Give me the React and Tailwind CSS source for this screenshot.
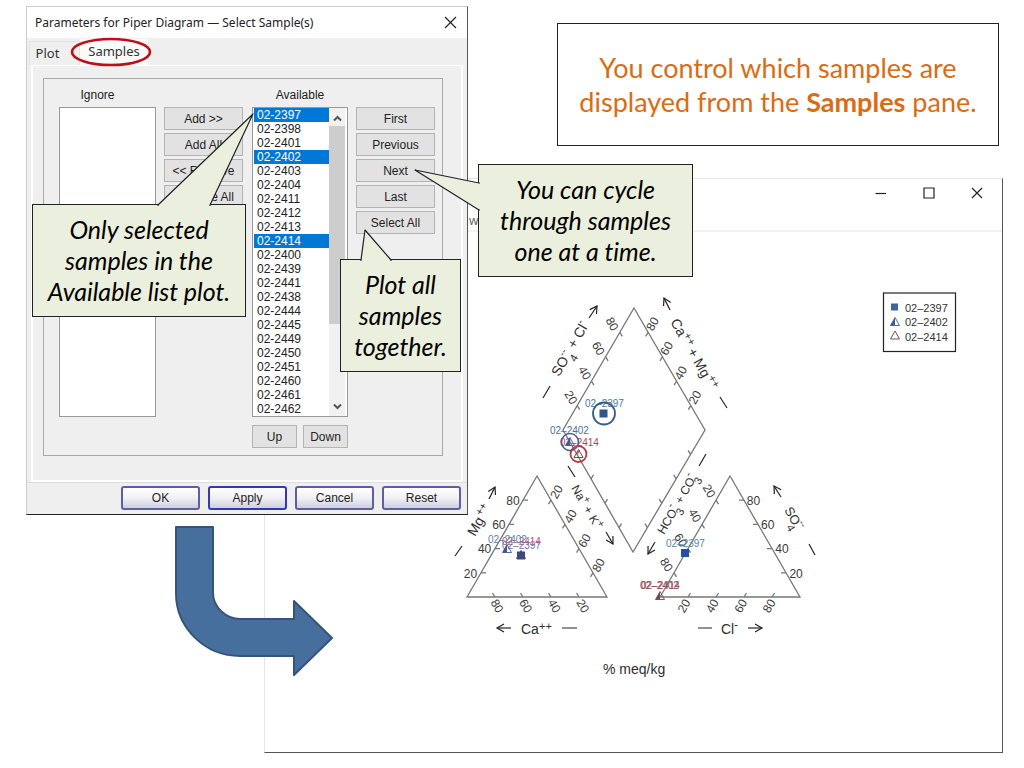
import React from "react";

const samples = [
  "02-2397", "02-2398", "02-2401", "02-2402", "02-2403", "02-2404", "02-2411", "02-2412",
  "02-2413", "02-2414", "02-2400", "02-2439", "02-2441", "02-2438", "02-2444", "02-2445",
  "02-2449", "02-2450", "02-2451", "02-2460", "02-2461", "02-2462",
];
const selected = ["02-2397", "02-2402", "02-2414"];

function PushButton({ children, className = "w-full" }) {
  return (
    <button
      type="button"
      className={`h-[23px] border border-[#b4b4b4] bg-[#e2e2e2] text-xs leading-none text-[#222] ${className}`}
    >
      {children}
    </button>
  );
}

function FooterButton({ children, primary }) {
  return (
    <button
      type="button"
      className={`h-6 w-[79px] rounded-[3px] border-2 bg-linear-to-b from-white via-[#f0f0f5] to-[#cfcfde] text-xs leading-none text-[#222] ${
        primary ? "border-[#3438b4]" : "border-[#5c5fa8]"
      }`}
    >
      {children}
    </button>
  );
}

function SampleDialog() {
  return (
    <section
      aria-label="Select samples"
      className="absolute top-[6px] left-[26px] flex w-[442px] flex-col border border-t-[#ccc] border-r-[#555] border-b-[#222] border-l-[#ccc] bg-[#efefef] font-['Liberation_Sans',Arial,sans-serif] text-xs text-[#222]"
    >
      <header className="flex h-[31px] items-center justify-between bg-white pr-[10px] pl-2">
        <h2 className="font-['Noto_Sans',sans-serif] text-xs whitespace-nowrap">
          Parameters for Piper Diagram — Select Sample(s)
        </h2>
        <button type="button" aria-label="Close">
          <svg width="13" height="13" viewBox="0 0 13 13" fill="none" stroke="#222" strokeWidth="1.2">
            <path d="M1 1L12 12M12 1L1 12" />
          </svg>
        </button>
      </header>

      <div role="tablist" className="flex h-[27px] items-end pl-[2px] font-['Noto_Sans',sans-serif] text-[13px]">
        <button type="button" role="tab" aria-selected="false" className="h-6 w-[51px] border border-b-0 border-[#e2e2e2] pr-[14px] text-[#333]">
          Plot
        </button>
        <button type="button" role="tab" aria-selected="true" className="relative h-[26px] w-[68px] bg-[#fafafa] text-[#333]">
          Samples
          <svg className="absolute -top-[2px] -left-[10px]" width="82" height="30" viewBox="0 0 82 30" fill="none">
            <ellipse cx="41" cy="15" rx="39" ry="13" stroke="#bb1018" strokeWidth="2.6" />
          </svg>
        </button>
      </div>

      <div className="mx-1 border-2 border-t border-white pt-3 pr-[18px] pb-6 pl-[10px]">
        <div className="flex h-[378px] items-start border border-[#a8a8a8] pt-2 pr-[7px] pl-[15px]">
          <div className="flex w-[97px] flex-col">
            <label htmlFor="ignore" className="mb-1 h-4 pr-5 text-center leading-4">Ignore</label>
            <select id="ignore" multiple className="h-[310px] border border-[#999] bg-white" />
          </div>

          <div className="mt-5 ml-2 flex w-[79px] flex-col gap-[3px]">
            <PushButton>Add &gt;&gt;</PushButton>
            <PushButton>Add All</PushButton>
            <PushButton>&lt;&lt; Remove</PushButton>
            <PushButton>Remove All</PushButton>
          </div>

          <div className="ml-[9px] flex w-24 flex-col">
            <label htmlFor="available" className="mb-1 h-4 text-center leading-4">Available</label>
            <div className="flex h-[310px] border border-[#999] bg-white">
              <select
                id="available"
                multiple
                size={22}
                defaultValue={selected}
                className="h-[308px] w-[76px] appearance-none overflow-hidden border-0 p-0 pl-px text-xs outline-none"
              >
                {samples.map((s) => (
                  <option
                    key={s}
                    value={s}
                    className="h-[14px] min-h-0 p-0 pl-[3px] leading-[14px] text-[#222] checked:bg-[#0078d7] checked:text-white"
                  >
                    {s}
                  </option>
                ))}
              </select>
              <div aria-hidden="true" className="flex w-4 flex-col items-center bg-[#f1f1f1]">
                <svg className="mt-[7px] mb-1" width="9" height="7" viewBox="0 0 9 7" fill="none" stroke="#555" strokeWidth="2">
                  <path d="M1 5.5L4.500 2L8 5.500" />
                </svg>
                <div className="h-[198px] w-full bg-[#cdcdcd]" />
                <svg className="mt-auto mb-[6px]" width="9" height="7" viewBox="0 0 9 7" fill="none" stroke="#555" strokeWidth="2">
                  <path d="M1 1.500L4.500 5L8 1.500" />
                </svg>
              </div>
            </div>
            <div className="mt-2 flex gap-[6px]">
              <PushButton className="w-[45px] shrink-0">Up</PushButton>
              <PushButton className="w-[45px] shrink-0">Down</PushButton>
            </div>
          </div>

          <div className="mt-5 ml-2 flex w-[79px] flex-col gap-[3px]">
            <PushButton>First</PushButton>
            <PushButton>Previous</PushButton>
            <PushButton>Next</PushButton>
            <PushButton>Last</PushButton>
            <PushButton>Select All</PushButton>
          </div>
        </div>
      </div>

      <footer className="flex justify-end gap-2 border-t border-[#ddd] px-[6px] pt-[3px] pb-1">
        <FooterButton>OK</FooterButton>
        <FooterButton primary>Apply</FooterButton>
        <FooterButton>Cancel</FooterButton>
        <FooterButton>Reset</FooterButton>
      </footer>
    </section>
  );
}

const fractions = [0.2, 0.4, 0.6, 0.8];

/* Ticks on the edge from a to b, each drawn as the short vector d. */
function Ticks({ a, b, d }) {
  const path = fractions
    .map((t) => `M${a[0] + (b[0] - a[0]) * t} ${a[1] + (b[1] - a[1]) * t}l${d[0]} ${d[1]}`)
    .join("");
  return <path d={path} />;
}

/* Four scale numbers spaced evenly from one point by a step, centred and rotated. */
function Scale({ from, step, angle = 0, values }) {
  return values.map((v, i) => (
    <text
      key={v}
      textAnchor="middle"
      dy="4"
      transform={`translate(${from[0] + step[0] * i} ${from[1] + step[1] * i}) rotate(${angle})`}
    >
      {v}
    </text>
  ));
}

/* An axis title made of [text, size, baseline shift, x] parts. */
function Title({ at, angle = 0, parts }) {
  return (
    <g transform={`translate(${at[0]} ${at[1]}) rotate(${angle})`}>
      {parts.map(([s, size, y, x]) => (
        <text key={x} x={x} y={y} fontSize={size}>{s}</text>
      ))}
    </g>
  );
}

function Arrow({ from, to }) {
  const angle = (Math.atan2(to[1] - from[1], to[0] - from[0]) * 180) / Math.PI;
  return (
    <g>
      <path d={`M${from[0]} ${from[1]}L${to[0]} ${to[1]}`} />
      <path d="M-7 -4L0 0L-7 4" transform={`translate(${to[0]} ${to[1]}) rotate(${angle})`} />
    </g>
  );
}

function HalfTriangle({ x, y, color = "#3f5a92" }) {
  return (
    <g transform={`translate(${x} ${y})`}>
      <path d="M0 -4.500L-4.500 3.500H0Z" fill={color} />
      <path d="M0 -4.500L-4.500 3.500H4.500Z" fill="none" stroke={color} strokeWidth="0.9" />
    </g>
  );
}

function OpenTriangle({ x, y, color = "#7d5050" }) {
  return <path d="M0 -4.500L-4.500 3.500H4.500Z" transform={`translate(${x} ${y})`} fill="none" stroke={color} strokeWidth="1" />;
}

function PiperDiagram() {
  const up80 = ["80", "60", "40", "20"];
  const up20 = ["20", "40", "60", "80"];
  return (
    <svg
      role="img"
      aria-label="Piper diagram"
      viewBox="265 232 737 520"
      className="block w-full font-['Liberation_Sans',Arial,sans-serif]"
    >
      <g fill="none" stroke="#777" strokeWidth="1.300">
        <path d="M634 308L705 430L633 552L563 430Z" />
        <path d="M537 476L607 597H467Z" />
        <path d="M730 476L800 597H660Z" />
        <Ticks a={[634, 308]} b={[563, 430]} d={[2.5, 4]} />
        <Ticks a={[634, 308]} b={[705, 430]} d={[-2.5, 4]} />
        <Ticks a={[705, 430]} b={[633, 552]} d={[-2.5, -4]} />
        <Ticks a={[563, 430]} b={[633, 552]} d={[2.5, -4]} />
        <Ticks a={[537, 476]} b={[467, 597]} d={[5, 0]} />
        <Ticks a={[537, 476]} b={[607, 597]} d={[-2.5, 4]} />
        <Ticks a={[467, 597]} b={[607, 597]} d={[-2.5, -4]} />
        <Ticks a={[730, 476]} b={[660, 597]} d={[2.5, 4]} />
        <Ticks a={[730, 476]} b={[800, 597]} d={[-5, 0]} />
        <Ticks a={[660, 597]} b={[800, 597]} d={[2.5, -4]} />
      </g>

      <g fill="#3a3a3a" fontSize="12">
        <Scale from={[612, 324]} step={[-13.7, 24.5]} angle={60} values={up80} />
        <Scale from={[652.5, 324]} step={[14.2, 24.5]} angle={-60} values={up80} />
        <Scale from={[513, 501]} step={[-14.2, 24.2]} values={up80} />
        <Scale from={[556.5, 492]} step={[14, 24.4]} angle={-60} values={up20} />
        <Scale from={[497, 606]} step={[28.6, 0]} angle={60} values={up80} />
        <Scale from={[709, 491]} step={[-14.2, 24.6]} angle={60} values={up20} />
        <Scale from={[753.5, 501]} step={[14.2, 24.2]} values={up80} />
        <Scale from={[684, 606]} step={[28.4, 0]} angle={-60} values={up20} />
      </g>

      <g fill="#2e2e2e">
        <Title at={[558, 379]} angle={-60} parts={[["SO", 14, 0, 2], ["4", 11, 7, 23], ["--", 10, -6, 22], ["+", 14, 0, 34], ["Cl", 14, 0, 46], ["-", 11, -6, 59]]} />
        <Title at={[670, 322]} angle={60} parts={[["Ca", 14, 0, 0], ["++", 11, -5, 18], ["+", 14, 0, 34], ["Mg", 14, 0, 46], ["++", 11, -5, 67]]} />
        <Title at={[475, 537]} angle={-60} parts={[["Mg", 14, 0, 0], ["++", 11, -5, 21]]} />
        <Title at={[571, 488]} angle={60} parts={[["Na", 12, 0, 0], ["+", 10, -5, 15], ["+", 12, 0, 24], ["K", 12, 0, 35], ["+", 10, -5, 43]]} />
        <Title at={[664, 535]} angle={-60} parts={[["HCO", 12, 0, 0], ["3", 11, 6, 25], ["-", 11, -6, 27], ["+", 12, 0, 35], ["CO", 12, 0, 45], ["3", 11, 6, 61], ["-", 11, -6, 63]]} />
        <Title at={[784, 510]} angle={60} parts={[["SO", 13, 0, 0], ["4", 11, 7, 16], ["--", 10, -6, 18]]} />
        <Title at={[521, 634]} parts={[["Ca", 14, 0, 0], ["++", 11, -4, 18]]} />
        <Title at={[721, 634]} parts={[["Cl", 14, 0, 0], ["-", 12, -5, 13]]} />
        <text x="603" y="674" fontSize="14">% meq/kg</text>
      </g>

      <g fill="none" stroke="#222" strokeWidth="1.200">
        <Arrow from={[589, 318]} to={[597, 306]} />
        <Arrow from={[670, 310]} to={[664, 298]} />
        <Arrow from={[489, 499]} to={[495, 487]} />
        <Arrow from={[606, 532]} to={[613, 544]} />
        <Arrow from={[655, 542]} to={[648, 554]} />
        <Arrow from={[781, 497]} to={[774, 486]} />
        <Arrow from={[511, 628]} to={[497, 628]} />
        <Arrow from={[748, 628]} to={[762, 628]} />
        <path d="M543 398L550 386M720 397L727 408M455 556L462 546M568 466L575 477M699 466L706 454M809 544L815 555M562 628H577M698 628H712" />
      </g>

      <g fontSize="10">
        <text x="585" y="407" fill="#4c76a0">02–2397</text>
        <text x="550" y="434" fill="#4c6f98">02–2402</text>
        <text x="560" y="446" fill="#b04850">02–2414</text>
        <text x="488" y="543" fill="#5a84ac">02–2402</text>
        <text x="502" y="545" fill="#b8586c">02–2414</text>
        <text x="502" y="549" fill="#6878b0">02–2397</text>
        <text x="666" y="547" fill="#4f88a8">02–2397</text>
        <text x="640" y="589" fill="#6c5458">02–2402</text>
        <text x="641" y="589" fill="#a05058">02–2414</text>
      </g>

      <rect x="599.5" y="409.5" width="8" height="8" fill="#2f5688" />
      <circle cx="604" cy="413.5" r="11" fill="none" stroke="#365e86" strokeWidth="1.800" />
      <HalfTriangle x={570} y={442} />
      <circle cx="570" cy="442" r="8.5" fill="none" stroke="#4a5f98" strokeWidth="1.600" />
      <OpenTriangle x={578.5} y={454} color="#903840" />
      <circle cx="578.5" cy="454" r="8" fill="none" stroke="#b43c46" strokeWidth="1.800" />
      <HalfTriangle x={507} y={549} />
      <rect x="517" y="551.5" width="8" height="8" fill="#414878" />
      <OpenTriangle x={521} y={555} color="#414878" />
      <rect x="681" y="549" width="8" height="8" fill="#2350a0" />
      <HalfTriangle x={660} y={596} color="#704858" />

      <rect x="883.5" y="293" width="72" height="58.500" fill="#fff" stroke="#222" strokeWidth="1.200" />
      <rect x="891" y="303.500" width="7" height="7" fill="#3f639c" />
      <HalfTriangle x={895} y={322} />
      <OpenTriangle x={895} y={335.500} />
      <g fontSize="11" fill="#333">
        <text x="905" y="312">02–2397</text>
        <text x="905" y="326">02–2402</text>
        <text x="905" y="341">02–2414</text>
      </g>
    </svg>
  );
}

function PlotWindow() {
  return (
    <section
      aria-label="Piper plot"
      className="absolute top-[178px] left-[264px] flex w-[739px] flex-col border border-t-[#e4e4e4] border-r-[#555] border-b-[#555] border-l-[#e4e4e4] bg-white"
    >
      <header className="flex h-7 items-center justify-end gap-9 pr-[19px] text-[#222]">
        <button type="button" aria-label="Minimize">
          <svg width="12" height="12" viewBox="0 0 12 12" stroke="currentColor" strokeWidth="1.200"><path d="M0.500 6.500H11" /></svg>
        </button>
        <button type="button" aria-label="Maximize">
          <svg width="12" height="12" viewBox="0 0 12 12" fill="none" stroke="currentColor" strokeWidth="1.200"><path d="M1 1H11V11H1Z" /></svg>
        </button>
        <button type="button" aria-label="Close">
          <svg width="12" height="12" viewBox="0 0 12 12" fill="none" stroke="currentColor" strokeWidth="1.200"><path d="M1 1L11 11M11 1L1 11" /></svg>
        </button>
      </header>
      <div className="flex h-[25px] items-center border-b-2 border-[#f2f2f2] pt-1 pl-[204px] font-['Noto_Sans',sans-serif] text-xs text-[#666]">
        w
      </div>
      <PiperDiagram />
    </section>
  );
}

/* Speech box; the tail path is given in the box's own coordinates and hides the edge under its base. */
function Callout({ className, tail, children }) {
  return (
    <div
      className={`absolute border border-[#222] bg-[#ebf0de] text-center font-[Lato,sans-serif] text-[25px] leading-[31px] whitespace-nowrap text-black italic [font-variant-ligatures:none] ${className}`}
    >
      <svg aria-hidden="true" className="absolute top-0 left-0 overflow-visible" width="1" height="1">
        <path d={tail} fill="#ebf0de" />
        <path d={tail} fill="none" stroke="#222" strokeWidth="1.200" strokeLinejoin="round" />
      </svg>
      <p className="relative">{children}</p>
    </div>
  );
}

export default function App() {
  return (
    <main className="relative min-h-screen overflow-hidden bg-white">
      <PlotWindow />
      <SampleDialog />

      <div className="absolute top-[23px] left-[557px] flex h-[123px] w-[442px] items-center justify-center border border-[#222] bg-white">
        <h1 className="text-center font-[Lato,sans-serif] text-[27px] leading-[34px] whitespace-nowrap text-[#d96c14]">
          You control which samples are
          <br />
          displayed from the <strong className="font-bold">Samples</strong> pane.
        </h1>
      </div>

      <Callout className="top-[204px] left-[32px] w-[214px] py-[9px]" tail="M125 1V0L220 -91L177 0V1">
        Only selected<br />samples in the<br />Available list plot.
      </Callout>
      <Callout className="top-[164px] left-[478px] w-[215px] py-[9px]" tail="M1 18H0L-64 5L0 45H1">
        You can cycle<br />through samples<br />one at a time.
      </Callout>
      <Callout className="top-[259px] left-[340px] w-[121px] py-[9px]" tail="M20 1V0L24 -30L50 0V1">
        Plot all<br />samples<br />together.
      </Callout>

      <svg aria-hidden="true" className="absolute top-[524px] left-[174px]" width="160" height="154" viewBox="174 524 160 154">
        <path
          d="M176 527H213V593C213 607 226 619 240 619H294V601L332 638L294 675V656H240C205 656 176 628 176 593Z"
          fill="#476f9e"
          stroke="#365478"
          strokeWidth="2"
          strokeLinejoin="round"
        />
      </svg>
    </main>
  );
}
